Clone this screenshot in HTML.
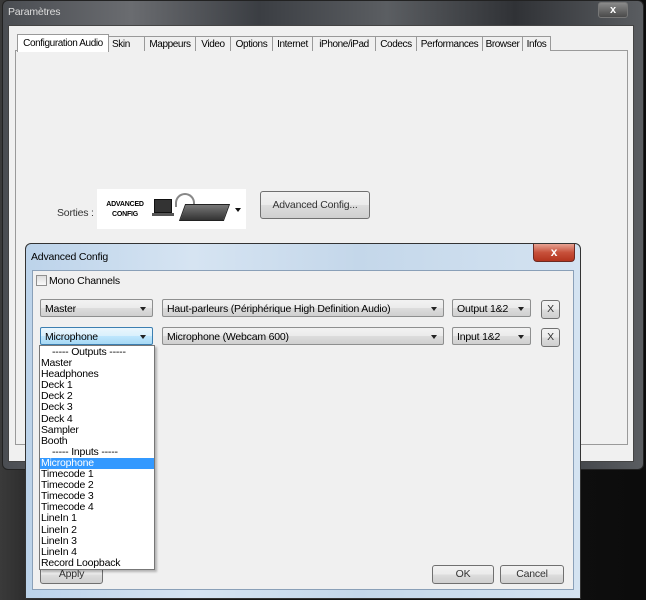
<!DOCTYPE html>
<html><head><meta charset="utf-8"><style>
*{box-sizing:border-box;margin:0;padding:0}
body{width:646px;height:600px;position:relative;overflow:hidden;background:#111;font-family:"Liberation Sans",sans-serif;font-size:10.5px;letter-spacing:-0.2px;color:#000}
.a{position:absolute}
.sel{position:absolute;height:18px;border:1px solid #8e8f8f;border-radius:2px;background:linear-gradient(#f2f2f2,#ebebeb 50%,#dddddd 51%,#cfcfcf);padding:3px 0 0 4px;white-space:nowrap;overflow:hidden}
.sel:after{content:"";position:absolute;right:6px;top:7px;border-left:3.5px solid transparent;border-right:3.5px solid transparent;border-top:4px solid #222}
.btn{position:absolute;border:1px solid #707070;border-radius:3px;background:linear-gradient(#f2f2f2,#ebebeb 50%,#dddddd 51%,#cfcfcf);text-align:center}
.tab{position:absolute;top:36px;height:15px;border:1px solid #999;border-bottom:none;background:#f0f0f0;padding-top:2px;text-align:center;white-space:nowrap;font-size:10px;letter-spacing:-0.4px;overflow:hidden}
.li{height:11.1px;line-height:11px;padding-left:1px;white-space:nowrap}
</style></head><body>
<div class="a" style="left:0;top:0;width:646px;height:600px;background:linear-gradient(90deg,#3a3a3a,#1b1b1b 10%,#0c0c0c)"></div>
<div class="a" style="left:2px;top:0;width:642px;height:470px;border-radius:6px;background:linear-gradient(90deg,#4a4d52,#6a6c70 20%,#3b3e43 40%,#5b5e62 60%,#303236 80%,#5a5d61);border:1px solid #222"></div>
<div class="a" style="left:8px;top:6px;color:#ddd">Paramètres</div>
<div class="a" style="left:598px;top:2px;width:30px;height:16px;border:1px solid #777;border-radius:3px;background:linear-gradient(#8a8a8a,#4a4a4a);color:#fff;font-weight:bold;text-align:center;font-size:11px;line-height:14px">x</div>
<div class="a" style="left:8px;top:25px;width:626px;height:437px;background:#f0f0f0;border:1px solid #444"></div>
<div class="a" style="left:15px;top:50px;width:613px;height:395px;border:1px solid #9a9a9a;background:#f0f0f0"></div>
<div class="tab" style="left:17px;top:34px;height:18px;width:92px;background:#fff;z-index:2;padding-top:3px">Configuration Audio</div>
<div class="tab" style="left:108px;width:37px;text-align:left;padding-left:3px">Skin</div>
<div class="tab" style="left:144px;width:52px">Mappeurs</div>
<div class="tab" style="left:195px;width:36px">Video</div>
<div class="tab" style="left:230px;width:43px">Options</div>
<div class="tab" style="left:272px;width:41px">Internet</div>
<div class="tab" style="left:312px;width:64px">iPhone/iPad</div>
<div class="tab" style="left:375px;width:42px">Codecs</div>
<div class="tab" style="left:416px;width:67px">Performances</div>
<div class="tab" style="left:482px;width:41px">Browser</div>
<div class="tab" style="left:522px;width:29px">Infos</div>
<div class="a" style="left:57px;top:207px;color:#333">Sorties :</div>
<div class="a" style="left:97px;top:189px;width:149px;height:40px;background:#fff">
 <div class="a" style="left:4px;top:11px;font-size:7px;font-weight:bold;text-align:center;line-height:10px;width:48px">ADVANCED<br>CONFIG</div>
 <div class="a" style="left:57px;top:10px;width:18px;height:14px;background:#333;border:1px solid #111"></div>
 <div class="a" style="left:55px;top:24px;width:22px;height:3px;background:#555"></div>
 <div class="a" style="left:78px;top:4px;width:20px;height:14px;border:2px solid #888;border-radius:10px 10px 0 0;border-bottom:none"></div>
 <div class="a" style="left:85px;top:15px;width:45px;height:17px;background:linear-gradient(#777,#333);transform:skewX(-20deg);border:1px solid #222"></div>
 <div class="a" style="left:138px;top:19px;border-left:3px solid transparent;border-right:3px solid transparent;border-top:4px solid #111"></div>
</div>
<div class="btn" style="left:260px;top:191px;width:110px;height:28px;line-height:26px;color:#333">Advanced Config...</div>

<div class="a" style="left:25px;top:243px;width:556px;height:356px;border:1px solid #333;border-radius:6px 6px 0 0;background:linear-gradient(90deg,#bcd3ea,#d6e4f2 30%,#c4d7ea 60%,#d4e3f1)"></div>
<div class="a" style="left:31px;top:251px">Advanced Config</div>
<div class="a" style="left:533px;top:244px;width:42px;height:18px;border:1px solid #6d2a22;border-top:none;border-radius:0 0 4px 4px;background:linear-gradient(#e8a393,#c7503a 50%,#b3341e);color:#fff;font-weight:bold;text-align:center;font-size:12px;line-height:16px">x</div>
<div class="a" style="left:32px;top:270px;width:542px;height:320px;background:#f0f0f0;border:1px solid #8aa0b8"></div>
<div class="a" style="left:36px;top:275px;width:11px;height:11px;border:1px solid #8f8f8f;background:linear-gradient(#ddd,#fafafa)"></div>
<div class="a" style="left:49px;top:275px">Mono Channels</div>
<div class="sel" style="left:40px;top:299px;width:113px">Master</div>
<div class="sel" style="left:162px;top:299px;width:282px">Haut-parleurs (Périphérique High Definition Audio)</div>
<div class="sel" style="left:452px;top:299px;width:79px">Output 1&amp;2</div>
<div class="btn" style="left:541px;top:300px;width:19px;height:19px;line-height:17px;color:#333">X</div>
<div class="sel" style="left:40px;top:327px;width:113px;border-color:#3c7fb1;background:linear-gradient(#eaf6fd,#d9f0fc 50%,#bee6fd 51%,#a7d9f5)">Microphone</div>
<div class="sel" style="left:162px;top:327px;width:282px">Microphone (Webcam 600)</div>
<div class="sel" style="left:452px;top:327px;width:79px">Input 1&amp;2</div>
<div class="btn" style="left:541px;top:328px;width:19px;height:19px;line-height:17px;color:#333">X</div>
<div class="btn" style="left:40px;top:565px;width:63px;height:19px;line-height:17px;color:#333">Apply</div>
<div class="btn" style="left:432px;top:565px;width:62px;height:19px;line-height:17px;color:#333">OK</div>
<div class="btn" style="left:500px;top:565px;width:64px;height:19px;line-height:17px;color:#333">Cancel</div>
<div class="a" style="left:39px;top:345px;width:116px;height:225px;background:#fff;border:1px solid #777;padding-top:1px;box-shadow:2px 2px 2px rgba(0,0,0,.25)">
<div class="li" style="padding-left:12px">----- Outputs -----</div>
<div class="li">Master</div><div class="li">Headphones</div><div class="li">Deck 1</div><div class="li">Deck 2</div><div class="li">Deck 3</div><div class="li">Deck 4</div><div class="li">Sampler</div><div class="li">Booth</div>
<div class="li" style="padding-left:12px">----- Inputs -----</div>
<div class="li" style="background:#3399ff;color:#fff">Microphone</div>
<div class="li">Timecode 1</div><div class="li">Timecode 2</div><div class="li">Timecode 3</div><div class="li">Timecode 4</div>
<div class="li">LineIn 1</div><div class="li">LineIn 2</div><div class="li">LineIn 3</div><div class="li">LineIn 4</div>
<div class="li">Record Loopback</div>
</div>
</body></html>
